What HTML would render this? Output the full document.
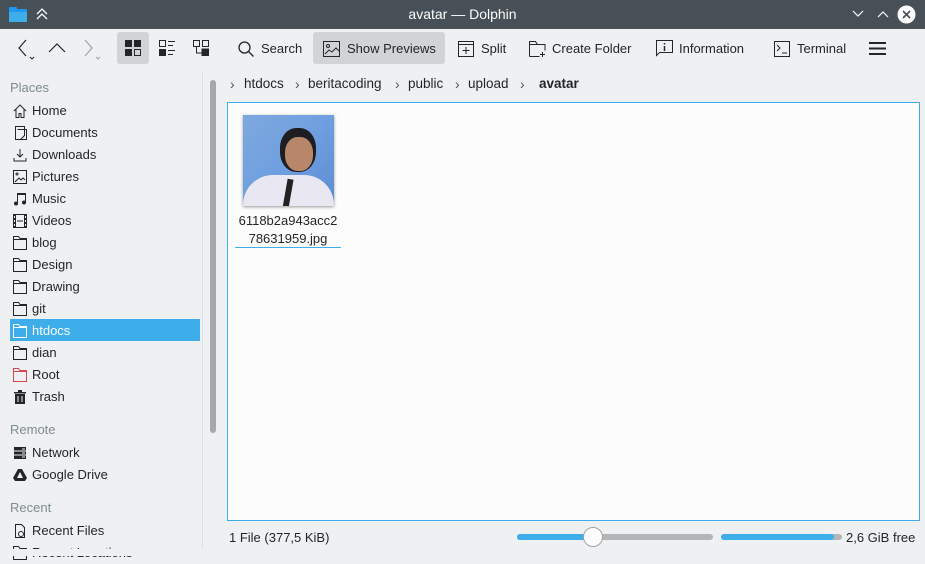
<!DOCTYPE html>
<html><head><meta charset="utf-8"><style>
*{margin:0;padding:0;box-sizing:border-box}
body{width:925px;height:556px;overflow:hidden;background:#eff0f1;font-family:"Liberation Sans","DejaVu Sans",sans-serif;font-size:13px;color:#232629;position:relative}
.abs{position:absolute}
#title{left:0;top:0;width:925px;height:29px;background:#475057;color:#fcfcfc;font-size:14px}
.tb{top:33px;height:31px;display:flex;align-items:center;font-size:13px;gap:6px}
.tb svg{flex:none}
.side div{position:absolute;left:10px;width:190px;height:22px;line-height:22px;padding-left:22px}
.side svg{position:absolute;left:3px;top:4px}
.hdr{color:#7f8c8d;left:10px;position:absolute}
.bc{position:absolute;top:76px;font-size:13.5px}
.ch{position:absolute;top:76px;color:#555;font-size:14px}
</style></head><body>
<div id="title" class="abs">
 <svg class="abs" style="left:9px;top:7px" width="18" height="15"><rect x="0" y="2" width="18" height="13" rx="1" fill="#1d99f3"/><rect x="0" y="0" width="8" height="4" rx="1" fill="#1d99f3"/><rect x="0" y="5" width="18" height="10" fill="#3daee9"/></svg>
 <svg class="abs" style="left:36px;top:7px" width="12" height="13" fill="none" stroke="#fcfcfc" stroke-width="1.3"><path d="M1 7l5-5 5 5M1 12l5-5 5 5"/></svg>
 <div class="abs" style="left:0;width:925px;top:6px;text-align:center">avatar — Dolphin</div>
 <svg class="abs" style="left:852px;top:10px" width="12" height="8" fill="none" stroke="#fcfcfc" stroke-width="1.2"><path d="M1 1l5 5 5-5"/></svg>
 <svg class="abs" style="left:877px;top:10px" width="12" height="8" fill="none" stroke="#fcfcfc" stroke-width="1.2"><path d="M1 7l5-5 5 5"/></svg>
 <svg class="abs" style="left:897px;top:5px" width="19" height="19"><circle cx="9.5" cy="9.5" r="9" fill="#fcfcfc"/><path d="M6 6l7 7M13 6l-7 7" stroke="#475057" stroke-width="1.6"/></svg>
</div>
<!-- toolbar -->
<svg class="abs" style="left:17px;top:39px" width="20" height="22" fill="none" stroke="#232629" stroke-width="1.2"><path d="M9 1L2 9l7 8"/><path d="M13 18l2 2 2-2" stroke-width="1"/></svg>
<svg class="abs" style="left:48px;top:42px" width="18" height="12" fill="none" stroke="#232629" stroke-width="1.2"><path d="M1 10l8-8 8 8"/></svg>
<svg class="abs" style="left:83px;top:39px" width="20" height="22" fill="none" stroke="#9fa2a5" stroke-width="1.2"><path d="M2 1l7 8-7 8"/><path d="M13 18l2 2 2-2" stroke-width="1"/></svg>
<div class="abs" style="left:117px;top:32px;width:32px;height:32px;background:#d1d3d5;border-radius:3px"></div>
<svg class="abs" style="left:125px;top:40px" width="16" height="16"><rect x="0" y="0" width="7" height="7" fill="#232629"/><rect x="9" y="0" width="7" height="7" fill="#232629"/><rect x="0" y="9" width="7" height="7" fill="#232629"/><rect x="9.5" y="9.5" width="6" height="6" fill="none" stroke="#232629"/></svg>
<svg class="abs" style="left:159px;top:40px" width="16" height="16" fill="#232629"><rect x=".5" y=".5" width="6" height="6" fill="none" stroke="#232629"/><rect x="9" y="1" width="7" height="1"/><rect x="9" y="5" width="5" height="1"/><rect x="0" y="9" width="7" height="7"/><rect x="9" y="10" width="7" height="1"/><rect x="9" y="14" width="5" height="1"/></svg>
<svg class="abs" style="left:193px;top:40px" width="16" height="16" fill="none" stroke="#232629"><rect x=".5" y=".5" width="6" height="6"/><rect x="9.5" y=".5" width="6" height="6"/><path d="M3.5 7v6h5"/><rect x="9" y="9" width="7" height="7" fill="#232629"/></svg>
<div class="abs" style="left:313px;top:32px;width:132px;height:32px;background:#d1d3d5;border-radius:3px"></div>
<div class="abs tb" style="left:238px"><svg width="16" height="16" fill="none" stroke="#232629" stroke-width="1.3"><circle cx="6.5" cy="6.5" r="5.5"/><path d="M10.5 10.5l5 5"/></svg><span style="margin-left:1px">Search</span></div>
<div class="abs tb" style="left:323px"><svg width="17" height="16" fill="none" stroke="#232629"><rect x=".5" y=".5" width="16" height="15"/><circle cx="5" cy="5" r="1.5"/><path d="M2 13l4-4 3 2 4-4 3 3"/></svg><span style="margin-left:1px">Show Previews</span></div>
<div class="abs tb" style="left:458px"><svg width="16" height="16" fill="none" stroke="#232629"><rect x=".5" y=".5" width="15" height="15"/><path d="M.5 3.5h15M8 6v7M4.5 9.5h7"/></svg><span style="margin-left:1px">Split</span></div>
<div class="abs tb" style="left:529px"><svg width="17" height="16" fill="none" stroke="#232629"><path d="M.5 15.5V.5h6l2 3h7.5v6M.5 3.5h8M.5 15.5h10M13.5 11v5M11 13.5h5"/></svg><span>Create Folder</span></div>
<div class="abs tb" style="left:656px"><svg width="17" height="17" fill="none" stroke="#232629"><path d="M.5 .5h16v12H3.5l-3 3z"/><path d="M8.5 3v1.5M8.5 6v5" stroke-width="1.5"/></svg><span>Information</span></div>
<div class="abs tb" style="left:774px"><svg width="16" height="16" fill="none" stroke="#232629"><rect x=".5" y=".5" width="15" height="15"/><path d="M3 4l3 3-3 3M8 12h5"/></svg><span style="margin-left:1px">Terminal</span></div>
<svg class="abs" style="left:869px;top:42px" width="17" height="13" fill="#232629"><rect y="0" width="17" height="2"/><rect y="5.5" width="17" height="2"/><rect y="11" width="17" height="2"/></svg>
<!-- sidebar -->
<div class="side">
<div class="hdr" style="top:77px;padding:0">Places</div>
<div style="top:100px"><svg width="14" height="14" fill="none" stroke="#232629"><path d="M1 7l6-6 6 6M3 5.5v8h3v-4h2v4h3v-8"/></svg>Home</div>
<div style="top:122px"><svg width="14" height="14" fill="none" stroke="#232629"><path d="M2.5.5h9v9l-4 4h-5z M4.5 3.5h9v10h-6"/></svg>Documents</div>
<div style="top:144px"><svg width="14" height="14" fill="none" stroke="#232629"><path d="M7 1v8M4 6l3 3 3-3M1 10v3h12v-3"/></svg>Downloads</div>
<div style="top:166px"><svg width="14" height="14" fill="none" stroke="#232629"><rect x=".5" y=".5" width="13" height="13"/><path d="M2 12l4-4 2 2 2-2 2 2" /><circle cx="4" cy="4" r="1"/></svg>Pictures</div>
<div style="top:188px"><svg width="14" height="14" fill="#232629"><path d="M4 1h9v9.5h-1V3H5v8.5H4z"/><circle cx="3" cy="11.5" r="2"/><circle cx="11" cy="10.5" r="2"/></svg>Music</div>
<div style="top:210px"><svg width="14" height="14" fill="#232629"><path d="M0 0h14v14H0zM3 1v12h8V1zM1 2v2h1V2zM1 6v2h1V6zM1 10v2h1v-2zM12 2v2h1V2zM12 6v2h1V6zM12 10v2h1v-2zM4 6.5h6v1H4z"/></svg>Videos</div>
<div style="top:232px"><svg width="14" height="14" fill="none" stroke="#232629"><path d="M.5 13.5V.5h5l1.5 2h6.5v11zM.5 3.5h13"/></svg>blog</div>
<div style="top:254px"><svg width="14" height="14" fill="none" stroke="#232629"><path d="M.5 13.5V.5h5l1.5 2h6.5v11zM.5 3.5h13"/></svg>Design</div>
<div style="top:276px"><svg width="14" height="14" fill="none" stroke="#232629"><path d="M.5 13.5V.5h5l1.5 2h6.5v11zM.5 3.5h13"/></svg>Drawing</div>
<div style="top:298px"><svg width="14" height="14" fill="none" stroke="#232629"><path d="M.5 13.5V.5h5l1.5 2h6.5v11zM.5 3.5h13"/></svg>git</div>
<div style="top:319px;height:22px;line-height:23px;background:#3daee9;color:#fcfcfc"><svg width="14" height="14" fill="none" stroke="#fcfcfc" style="top:5px"><path d="M.5 13.5V.5h5l1.5 2h6.5v11zM.5 3.5h13"/></svg>htdocs</div>
<div style="top:342px"><svg width="14" height="14" fill="none" stroke="#232629"><path d="M.5 13.5V.5h5l1.5 2h6.5v11zM.5 3.5h13"/></svg>dian</div>
<div style="top:364px"><svg width="14" height="14" fill="none" stroke="#da4453"><path d="M.5 13.5V.5h5l1.5 2h6.5v11zM.5 3.5h13"/></svg>Root</div>
<div style="top:386px"><svg width="14" height="14" fill="#232629"><path d="M1 2h12v1.5H1zM5 0h4v2H5zM2 4h10v10H2z"/><path d="M5 6v6M9 6v6" stroke="#eff0f1"/></svg>Trash</div>
<div class="hdr" style="top:419px;padding:0">Remote</div>
<div style="top:442px"><svg width="14" height="14" fill="#232629"><path d="M1 1h12v12H1z"/><path d="M1 5h12M1 9h12M9 3h3M9 7h3M9 11h3" stroke="#eff0f1"/></svg>Network</div>
<div style="top:464px"><svg width="14" height="14" fill="#232629"><path d="M5 1h4l5 9-2 3H2L0 10z"/><path d="M7 4l-3 6h6z" fill="#eff0f1"/></svg>Google Drive</div>
<div class="hdr" style="top:497px;padding:0">Recent</div>
<div style="top:520px"><svg width="14" height="14" fill="none" stroke="#232629"><path d="M2.5.5h6l3 3v10h-9z"/><circle cx="8" cy="10" r="2.5"/></svg>Recent Files</div>
<div style="top:542px"><svg width="14" height="14" fill="none" stroke="#232629"><path d="M.5 13.5V.5h5l1.5 2h6.5v11z"/></svg>Recent Locations</div>
</div>
<div class="abs" style="left:0;top:549px;width:202px;height:7px;background:#eff0f1"></div>
<div class="abs" style="left:202px;top:72px;width:1px;height:477px;background:#dcdee0"></div>
<div class="abs" style="left:210px;top:80px;width:6px;height:353px;background:#a5a7a9;border-radius:3px"></div>
<!-- breadcrumb -->
<span class="ch" style="left:230px">›</span><span class="bc" style="left:244px">htdocs</span>
<span class="ch" style="left:295px">›</span><span class="bc" style="left:308px">beritacoding</span>
<span class="ch" style="left:395px">›</span><span class="bc" style="left:408px">public</span>
<span class="ch" style="left:455px">›</span><span class="bc" style="left:468px">upload</span>
<span class="ch" style="left:520px">›</span><b class="bc" style="left:539px">avatar</b>
<!-- view -->
<div class="abs" style="left:227px;top:102px;width:693px;height:419px;background:#fcfcfc;border:1px solid #3daee9"></div>
<div class="abs" style="left:243px;top:115px;width:91px;height:91px;background:linear-gradient(135deg,#7fa9dd,#6f9fe0 50%,#5d8bd0);box-shadow:0 1px 3px rgba(0,0,0,.4);overflow:hidden">
 <div class="abs" style="left:37px;top:13px;width:36px;height:44px;border-radius:45%;background:#1e1e22"></div>
 <div class="abs" style="left:42px;top:22px;width:28px;height:34px;border-radius:45%;background:#b8876a"></div>
 <div class="abs" style="left:0;top:60px;width:91px;height:40px;background:#e9e8f2;border-radius:30px 30px 0 0"></div>
 <div class="abs" style="left:42px;top:64px;width:6px;height:30px;background:#222;transform:rotate(10deg)"></div>
</div>
<div class="abs" style="left:231px;top:212px;width:114px;text-align:center;line-height:18px;font-size:13px">6118b2a943acc2<br>78631959.jpg</div>
<div class="abs" style="left:235px;top:247px;width:106px;height:1px;background:#3daee9"></div>
<!-- status -->
<div class="abs" style="left:229px;top:530px">1 File (377,5 KiB)</div>
<div class="abs" style="left:517px;top:534px;width:196px;height:6px;background:#b4b5b6;border-radius:3px"></div>
<div class="abs" style="left:517px;top:534px;width:76px;height:6px;background:#3daee9;border-radius:3px"></div>
<div class="abs" style="left:583px;top:527px;width:20px;height:20px;border-radius:50%;background:#fcfcfc;border:1px solid #a0a2a4"></div>
<div class="abs" style="left:721px;top:534px;width:121px;height:6px;background:#b4b5b6;border-radius:3px"></div>
<div class="abs" style="left:721px;top:534px;width:113px;height:6px;background:#3daee9;border-radius:3px"></div>
<div class="abs" style="left:846px;top:530px">2,6 GiB free</div>
</body></html>
